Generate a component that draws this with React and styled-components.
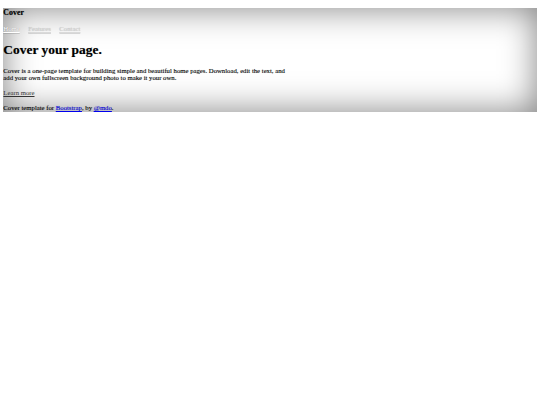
import React from 'react';
import styled, { createGlobalStyle } from 'styled-components';

// the page is the bare Bootstrap cover markup, scaled down to about 0.42
const GlobalStyle = createGlobalStyle`
  html, body {
    margin: 0;
    padding: 0;
    background: #fff;
  }
  body {
    font-family: "Liberation Serif", "Times New Roman", serif;
    font-size: 6.72px;
    line-height: 1.15;
    color: #000;
  }
`;

const Cover = styled.div`
  margin: 7.86px 3.36px 0;
  padding-bottom: 0.5px;
  background: #fff;
  text-shadow: 0 0.34px 0.67px rgba(0, 0, 0, 0.4);
  box-shadow: inset 0 0 33.6px rgba(0, 0, 0, 0.5);
  overflow: hidden;
`;

const Brand = styled.h3`
  margin: 0 0 7.86px;
  font-size: 7.86px;
  font-weight: bold;
`;

const Masthead = styled.nav`
  display: block;
`;

const NavLink = styled.a`
  color: ${p => (p.$active ? '#fff' : 'rgba(255, 255, 255, 0.5)')};
  border-bottom: 1.68px solid ${p => (p.$active ? '#fff' : 'transparent')};
  text-decoration: underline;

  & + & {
    margin-left: 6.72px;
  }
`;

const Title = styled.h1`
  margin: 9.4px 0;
  font-size: 13.44px;
  font-weight: bold;
`;

const Lead = styled.p`
  margin: 7.2px 0;
  max-width: 290px;
`;

const LearnMore = styled.a`
  color: #333;
  text-shadow: none;
  text-decoration: underline;
`;

const Footer = styled.footer`
  p {
    margin: 7px 0 0;
  }

  a {
    color: #0000ee;
    text-decoration: underline;
  }
`;

export default function App() {
  return (
    <>
      <GlobalStyle />
      <Cover>
        <header>
          <Brand>Cover</Brand>
          <Masthead>
            <NavLink $active href="#">Home</NavLink>{' '}
            <NavLink href="#">Features</NavLink>{' '}
            <NavLink href="#">Contact</NavLink>
          </Masthead>
        </header>
        <main>
          <Title>Cover your page.</Title>
          <Lead>
            Cover is a one-page template for building simple and beautiful home pages. Download, edit the text, and add your own fullscreen background photo to make it your own.
          </Lead>
          <Lead>
            <LearnMore href="#">Learn more</LearnMore>
          </Lead>
        </main>
        <Footer>
          <p>
            Cover template for <a href="#">Bootstrap</a>, by <a href="#">@mdo</a>.
          </p>
        </Footer>
      </Cover>
    </>
  );
}
